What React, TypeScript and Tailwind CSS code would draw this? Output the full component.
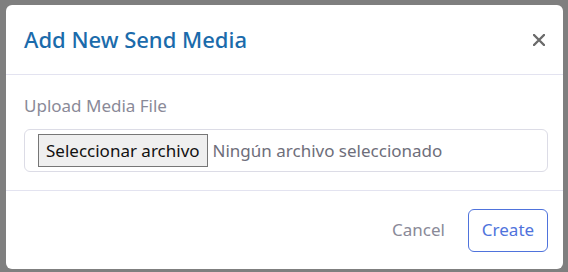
export default function App() {
	return (
		<div className="h-[272px] w-[568px] bg-[#7f7f7f] pl-[6px] pt-[5px] font-['Segoe_UI','Noto_Sans',sans-serif]">
			<div className="flex h-[264px] w-[557px] flex-col rounded-[6px] bg-white">
				{/* Header */}
				<div className="flex h-[70px] items-center justify-between border-b border-[#e3e3f0] pl-[18px] pr-[18px]">
					<h5 className="text-[22px] font-medium text-[#1b6bab]">Add New Send Media</h5>
					<button className="flex h-[12px] w-[12px] items-center justify-center">
						<svg width="12" height="12" viewBox="0 0 12 12">
							<path d="M1 1L11 11M11 1L1 11" stroke="#6b6b6b" strokeWidth="2.4" strokeLinecap="round" />
						</svg>
					</button>
				</div>

				{/* Body */}
				<div className="flex h-[116px] flex-col border-b border-[#e3e3f0] pl-[18px] pr-[15px] pt-[19px]">
					<label className="text-[17px] leading-[24px] text-[#8a8a98]">Upload Media File</label>
					<div className="mt-[11px] flex h-[43px] items-center rounded-[6px] border border-[#dcdce6] pl-[13px]">
						<div className="flex h-[33px] items-center border border-[#767676] bg-[#efefef] px-[7px] text-[17px] text-[#111]">
							Seleccionar archivo
						</div>
						<span className="ml-[5px] text-[17px] text-[#6e6e7a]">Ningún archivo seleccionado</span>
					</div>
				</div>

				{/* Footer */}
				<div className="flex flex-1 items-center justify-end gap-[23px] pr-[15px]">
					<button className="text-[17px] text-[#8a8a98]">Cancel</button>
					<button className="flex h-[43px] w-[80px] items-center justify-center rounded-[6px] border border-[#4f73dc] text-[17px] text-[#4f73dc]">
						Create
					</button>
				</div>
			</div>
		</div>
	)
}
